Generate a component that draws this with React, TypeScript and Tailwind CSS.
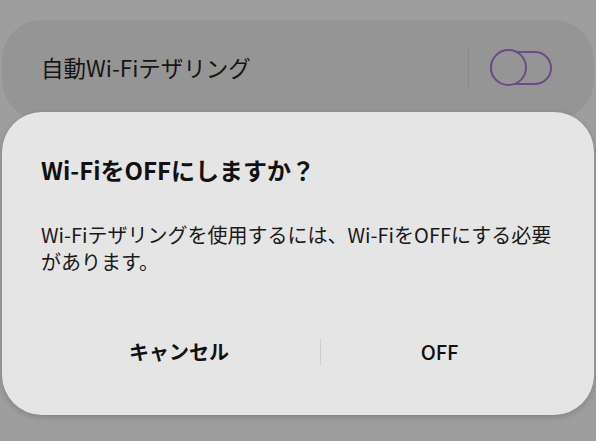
export default function App() {
  const font = { fontFamily: '"Noto Sans CJK JP", "Noto Sans", sans-serif' }
  return (
    <div
      className="w-[596px] h-[441px] overflow-hidden bg-[#9e9e9e] px-[2px] pt-[20px]"
      style={font}
    >
      {/* Setting row behind the dialog */}
      <div className="h-[100px] rounded-[40px] bg-[#959595] flex items-start pt-[28px] pl-[39px] pr-[41px]">
        <div className="flex-1 text-[22.5px] leading-[38px] text-[#161616]">自動Wi-Fiテザリング</div>
        <div className="w-px h-[39px] bg-[#8a8a8a] mr-[21px]" />
        <svg width="63" height="37" viewBox="0 0 63 37" fill="none" className="mt-[1px]">
          <rect x="1" y="3" width="60" height="32" rx="16" stroke="#6c4c86" strokeWidth="2" />
          <circle cx="18.5" cy="18.5" r="17.5" stroke="#6c4c86" strokeWidth="2" fill="#959595" />
        </svg>
      </div>

      {/* Dialog */}
      <div className="relative -mt-[8px] h-[303px] rounded-[40px] bg-[#e5e5e5] shadow-[0_2px_6px_rgba(0,0,0,0.18)] pt-[42px] flex flex-col">
        <div className="pl-[39px] text-[24px] leading-[32px] font-bold text-[#111]">
          Wi-FiをOFFにしますか？
        </div>
        <div className="pl-[39px] pr-[30px] mt-[35px] text-[20px] leading-[27px] text-[#1a1a1a]">
          Wi-Fiテザリングを使用するには、Wi-FiをOFFにする必要があります。
        </div>
        <div className="mt-auto mb-[35px] flex items-center px-[36px] h-[56px]">
          <div className="w-[282px] text-center text-[20px] font-bold text-[#111]">キャンセル</div>
          <div className="w-px h-[26px] bg-[#cdcdcd]" />
          <div className="flex-1 text-center text-[20px] font-medium text-[#111]">OFF</div>
        </div>
      </div>
    </div>
  )
}
